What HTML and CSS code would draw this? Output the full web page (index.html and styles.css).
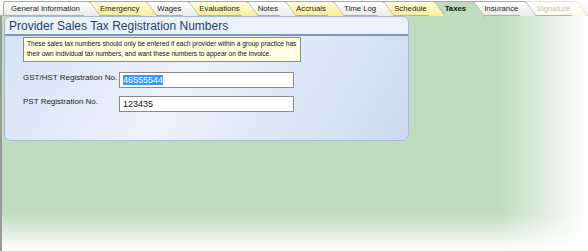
FILE: index.html
```html
<!DOCTYPE html>
<html lang="en">
<head>
    <meta charset="UTF-8">
    <title>Provider - Taxes</title>
    <link rel="stylesheet" href="styles.css">
</head>
<body>
    <div class="window">
        <div class="tabs">
            <div class="tab first"><span>General Information</span></div>
            <div class="tab yellow"><span>Emergency</span></div>
            <div class="tab"><span>Wages</span></div>
            <div class="tab yellow"><span>Evaluations</span></div>
            <div class="tab"><span>Notes</span></div>
            <div class="tab yellow"><span>Accruals</span></div>
            <div class="tab"><span>Time Log</span></div>
            <div class="tab yellow"><span>Schedule</span></div>
            <div class="tab active"><span>Taxes</span></div>
            <div class="tab"><span>Insurance</span></div>
            <div class="tab disabled"><span>Signature</span></div>
        </div>

        <div class="stage">
            <div class="panel">
                <h1 class="panel-title">Provider Sales Tax Registration Numbers</h1>
                <div class="panel-body">
                    <div class="note">
                        These sales tax numbers should only be entered if each provider within a group practice has<br>
                        their own individual tax numbers, and want these numbers to appear on the invoice.
                    </div>
                    <div class="field">
                        <label>GST/HST Registration No.</label>
                        <div class="input"><span class="selected">46555544</span></div>
                    </div>
                    <div class="field">
                        <label>PST Registration No.</label>
                        <div class="input">123435</div>
                    </div>
                </div>
            </div>
        </div>
    </div>
</body>
</html>
```

FILE: styles.css
```css
* {
    margin: 0;
    padding: 0;
    box-sizing: border-box;
}

body {
    width: 588px;
    height: 251px;
    overflow: hidden;
    background: #fff;
    font-family: 'Liberation Sans', Arial, sans-serif;
}

.window {
    display: flex;
    flex-direction: column;
    height: 100%;
}

/* tab strip */
.tabs {
    display: flex;
    height: 16px;
    padding: 1px 0 0 3px;
    background: linear-gradient(#ffffff, #f4f4f4);
    border-bottom: 1px solid #a9b3a9;
}

.tab {
    position: relative;
    height: 14px;
    padding: 0 6px 0 12px;
    font-size: 7.8px;
    line-height: 13px;
    color: #1c1c1c;
    white-space: nowrap;
    background: linear-gradient(#ffffff, #ebebeb);
    border-top: 1px solid #a8a8a8;
}

.tab span {
    position: relative;
    z-index: 2;
}

.tab.first {
    padding: 0 8px 0 7px;
    border-left: 1px solid #a8a8a8;
    border-radius: 3px 0 0 0;
}

/* slanted right edge, drawn over the next tab */
.tab::after {
    content: "";
    position: absolute;
    top: -1px;
    right: -2px;
    width: 16px;
    height: 14px;
    z-index: 1;
    background: inherit;
    border-top: 1px solid #a8a8a8;
    border-right: 1px solid #a8a8a8;
    border-radius: 0 3px 0 0;
    transform: skewX(36deg);
    transform-origin: top left;
}

.tab.yellow {
    background: linear-gradient(#fffce0, #fbee94);
}

.tab.active {
    height: 15px;
    font-weight: bold;
    color: #111;
    background: #c0dcc0;
}

.tab.active::after {
    height: 15px;
}

.tab.disabled {
    color: #c4c4c4;
    background: linear-gradient(#ffffff, #fbf8e8);
    border-color: #e0e0e0;
}

.tab.disabled::after {
    border-color: #e0e0e0;
}

/* green work area */
.stage {
    flex: 1;
    padding-left: 2px;
    border-left: 2px solid #9a9a9a;
    background:
        linear-gradient(to right, rgba(255, 255, 255, 0) 85%, #fff 100%),
        linear-gradient(to bottom, rgba(255, 255, 255, 0) 84%, #fff 100%),
        #c0dcc0;
}

.panel {
    width: 405px;
    height: 125px;
    border: 1px solid #a7bad2;
    border-radius: 7px;
    background: linear-gradient(120deg, #d5e2f5 0%, #edf2fb 45%, #cbdaf0 100%);
    overflow: hidden;
}

.panel-title {
    height: 19px;
    padding: 2px 0 0 4px;
    font-size: 12px;
    font-weight: normal;
    line-height: 14px;
    color: #243f6e;
    background: #eaf1fb;
    border-bottom: 2px solid #8196b4;
}

.panel-body {
    padding: 1px 0 0 18px;
}

.note {
    width: 278px;
    height: 25px;
    padding: 1px 3px;
    font-size: 6.6px;
    line-height: 10px;
    color: #111;
    white-space: nowrap;
    background: #ffffe1;
    border: 1px solid #8f8f7f;
}

.field {
    display: flex;
    align-items: flex-start;
    margin-top: 10px;
}

.field + .field {
    margin-top: 8px;
}

label {
    width: 96px;
    padding-top: 1px;
    font-size: 8px;
    color: #222;
    white-space: nowrap;
}

.input {
    width: 175px;
    height: 16px;
    padding: 2px 3px;
    font-size: 9px;
    line-height: 10px;
    color: #111;
    background: #fff;
    border: 1px solid #8a8a8a;
}

.selected {
    background: #3399ff;
    color: #fff;
}
```
